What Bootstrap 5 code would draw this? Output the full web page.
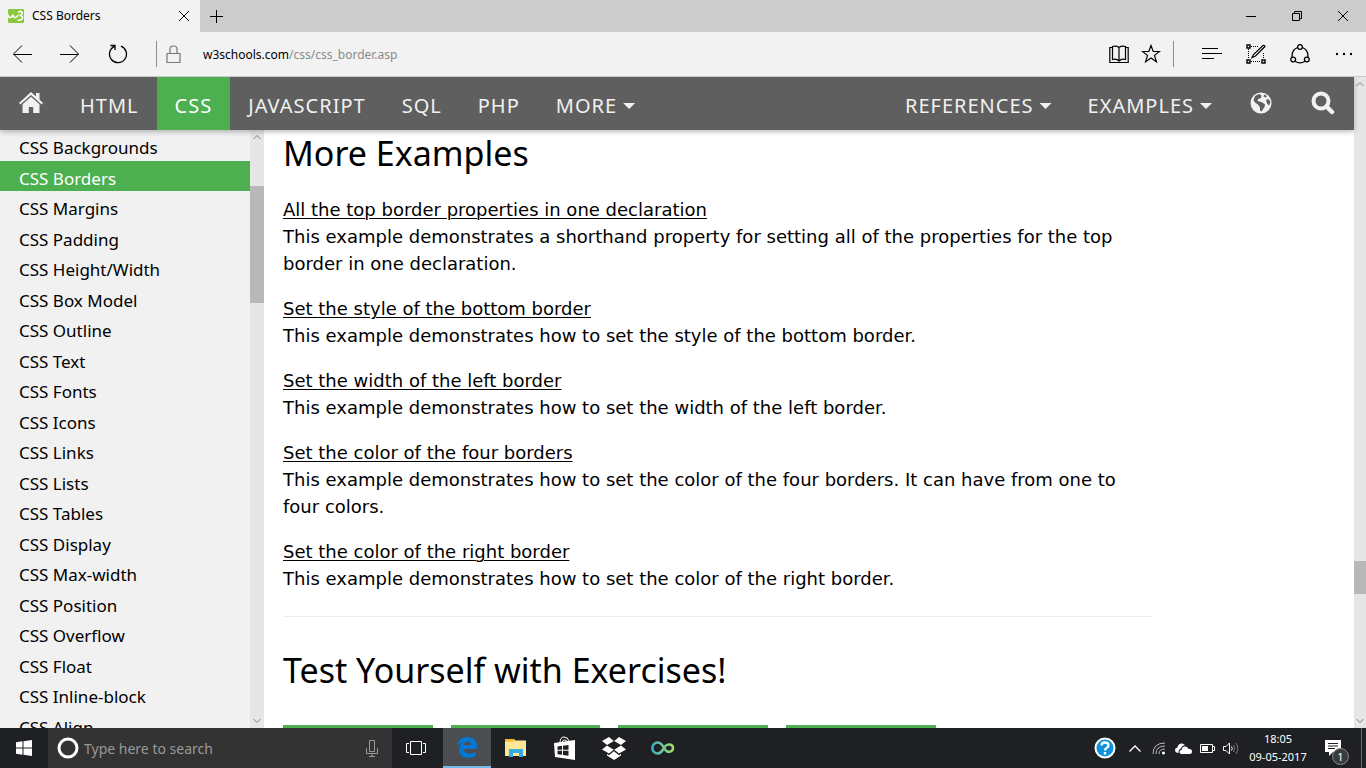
<!DOCTYPE html>
<html lang="en">
<head>
<meta charset="utf-8">
<meta name="viewport" content="width=device-width, initial-scale=1">
<title>CSS Borders</title>
<link href="https://cdn.jsdelivr.net/npm/bootstrap@5.3.0/dist/css/bootstrap.min.css" rel="stylesheet">
<style>
  body { font-family: "Noto Sans", "Open Sans", sans-serif; font-size: 12px; color: #000; background: #fff; }
  button { border: 0; background: transparent; padding: 0; color: inherit; }
  svg { display: block; flex: none; }
  .stroke { fill: none; stroke: currentColor; }

  /* browser chrome */
  .tabstrip { height: 32px; background: #ccc; }
  .tab-open { width: 200px; background: #f2f2f2; padding: 0 10px 0 8px; }
  .tab-add { width: 32px; }
  .win-btn { width: 46px; }
  .toolbar { height: 45px; background: #f2f2f2; border-bottom: 1px solid #c8c8c8; }
  .tool-btn { width: 44px; height: 44px; }
  .tool-btn.narrow { width: 32px; }
  .bar { width: 1px; height: 26px; background: #8c8c8c; }
  .bar-right { margin: 0 16px 0 6px; }
  .lock { color: #777; }
  .address { padding: 1px 0 0 10px; color: #8a8a8a; white-space: nowrap; }

  /* site navigation */
  .topnav { height: 53px; background: #5f5f5f; box-shadow: 0 2px 5px rgba(0,0,0,.26); z-index: 3; }
  .topnav a { color: #f1f1f1; text-decoration: none; font-size: 20px; letter-spacing: 1px; padding: 5px 18px 0; white-space: nowrap; }
  .topnav a.active { background: #4caf50; color: #fff; }
  .topnav a.icon-cell { width: 62px; padding: 0 0 2px; }
  .caret { width: 12px; height: 6px; margin-left: 6px; background: currentColor; clip-path: polygon(0 0, 100% 0, 50% 100%); }

  /* sidebar */
  .side-list { width: 250px; background: #f1f1f1; }
  .side-list a { color: #000; text-decoration: none; font-size: 17px; line-height: 1.5; padding: 5px 0 0 19px; flex: none; }
  .side-list a.active { background: #4caf50; color: #fff; }
  .scroll-track { background: #e6e6e6; color: #808080; }
  .scroll-side { width: 14px; }
  .scroll-page { width: 12px; }
  .thumb-side { height: 117px; margin-top: 46px; background: #b8b8b8; }
  .thumb-page { height: 33px; margin-top: 474px; background: #b8b8b8; }

  /* article */
  .article { padding: 0 19px; font-family: "DejaVu Sans", sans-serif; font-size: 18px; line-height: 27px; }
  .article h2 { font-family: "Noto Sans", "Open Sans", sans-serif; font-size: 34px; line-height: 46px; font-weight: 400; margin: 0 0 20px; }
  .article p { margin: 0 0 18px; }
  .article a { color: #000; text-decoration: underline; text-underline-offset: 2px; text-decoration-thickness: 1px; }
  .article hr { margin: 24px 0 30px; border-top: 1px solid #eee; opacity: 1; }
  .exercises { display: grid; grid-template-columns: repeat(4, 1fr); gap: 18px; margin-top: 32px; }
  .exercises a { height: 48px; background: #4caf50; }

  /* taskbar */
  .taskbar { height: 40px; background: #1f2023; color: #fff; z-index: 4; }
  .start { width: 48px; }
  .search { width: 344px; background: #333; color: #999; padding: 0 14px 0 9px; }
  .search input { border: 0; background: transparent; font-size: 14px; color: #fff; outline: 0; padding: 0 0 0 5px; }
  .search input::placeholder { color: #999; opacity: 1; }
  .app { width: 48px; }
  .app.current { background: #4b4d50; border-bottom: 2px solid #76b9ed; }
  .pinned { gap: 1px; margin-left: 3px; }
  .help { width: 36px; }
  .tray { width: 24px; }
  .clock { width: 70px; line-height: 18px; font-size: 11px; }
  .notice { width: 48px; }
  .notice-count { right: 12px; bottom: 3px; width: 17px; height: 17px; border-radius: 50%; background: #3a3b3d; border: 1px solid #8a8a8a; line-height: 15px; font-size: 11px; }
  .peek { width: 5px; border-left: 1px solid #6a6a6a; }
</style>
</head>
<body class="d-flex flex-column vh-100 overflow-hidden">

<header class="flex-shrink-0">
  <div class="tabstrip d-flex">
    <div class="tab-open d-flex align-items-center">
      <svg width="16" height="14" viewBox="0 0 16 14"><rect width="16" height="14" rx="1" fill="#8bc63f"/><path d="M0 5.500q.5 3.500 2.500 3T5 5.500q.3 3.500 2.500 3T10 5.500M10 3.500q2.500-2 4-.5 1 2.500-2.500 3.500 3.500 0 3 2.500-1 3-5 2" fill="none" stroke="#fff" stroke-width="1.500"/></svg>
      <span class="ms-2 flex-grow-1">CSS Borders</span>
      <button aria-label="Close tab"><svg width="12" height="12" viewBox="0 0 12 12" class="stroke"><path d="M1 1l10 10M11 1L1 11"/></svg></button>
    </div>
    <button class="tab-add d-flex align-items-center justify-content-center" aria-label="New tab"><svg width="13" height="13" viewBox="0 0 13 13" class="stroke"><path d="M6.500 0v13M0 6.500h13"/></svg></button>
    <div class="d-flex ms-auto">
      <button class="win-btn d-flex align-items-center justify-content-center" aria-label="Minimize"><svg width="10" height="10" class="stroke"><path d="M0 5.500h10"/></svg></button>
      <button class="win-btn d-flex align-items-center justify-content-center" aria-label="Restore"><svg width="10" height="10" class="stroke"><path d="M.5 2.500h7v7h-7zM2.500 2.500v-2h7v7h-2"/></svg></button>
      <button class="win-btn d-flex align-items-center justify-content-center" aria-label="Close"><svg width="10" height="10" class="stroke"><path d="M0 0l10 10M10 0L0 10"/></svg></button>
    </div>
  </div>

  <div class="toolbar d-flex align-items-center">
    <div class="d-flex gap-1">
      <button class="tool-btn d-flex align-items-center justify-content-center" aria-label="Back"><svg width="20" height="18" viewBox="0 0 20 18" class="stroke"><path d="M10 .5L1.500 9l8.500 8.500M1.500 9.500H20"/></svg></button>
      <button class="tool-btn d-flex align-items-center justify-content-center" aria-label="Forward"><svg width="20" height="18" viewBox="0 0 20 18" class="stroke"><path d="M10 .5L18.500 9 10 17.500M18.500 9.500H0"/></svg></button>
      <button class="tool-btn d-flex align-items-center justify-content-center" aria-label="Refresh"><svg width="20" height="20" viewBox="0 0 20 20" class="stroke"><path d="M13 2.200a8.500 8.500 0 1 1-6.500.2M2.500 1.500H7V6" stroke-width="1.300"/></svg></button>
    </div>
    <div class="bar ms-3"></div>
    <button class="lock tool-btn narrow d-flex align-items-center justify-content-center" aria-label="Site information"><svg width="15" height="19" viewBox="0 0 15 19" class="stroke"><path d="M1 8.500h13v9H1zM4 8V4q0-3 3.500-3T11 4v4" stroke-width="1.200"/></svg></button>
    <div class="address flex-grow-1 ms-1" role="textbox" aria-label="Address"><span class="text-black">w3schools.com</span>/css/css_border.asp</div>
    <button class="tool-btn narrow d-flex align-items-center justify-content-center" aria-label="Reading view"><svg width="20" height="19" viewBox="0 0 20 19" class="stroke"><path d="M10 2.500Q7.500.5 3.500 1.500v13q4-1 6.500 1.500 2.500-2.500 6.500-1.500v-13Q12.500.5 10 2.500v13M3 2.500H.8v15h18.400v-15H17" stroke-width="1.200"/></svg></button>
    <button class="tool-btn narrow d-flex align-items-center justify-content-center" aria-label="Add to favorites"><svg width="20" height="20" viewBox="0 0 20 20" class="stroke"><path d="M10 1.500l2.200 6h6.300l-5 3.900 1.900 6.300-5.400-3.700-5.400 3.700 1.900-6.300-5-3.900h6.300z" stroke-width="1.200"/></svg></button>
    <div class="bar bar-right"></div>
    <button class="tool-btn d-flex align-items-center justify-content-center" aria-label="Hub"><svg width="20" height="12" viewBox="0 0 20 12" class="stroke"><path d="M0 .5h16M0 5.500h20M0 10.500h12"/></svg></button>
    <button class="tool-btn d-flex align-items-center justify-content-center" aria-label="Web note"><svg width="20" height="20" viewBox="0 0 20 20" class="stroke"><path d="M5 2.500h7M2.500 5v10M5 17.500h10M17.500 9v6" stroke-dasharray="1 1"/><path d="M1 1h3v3H1zM1 16h3v3H1zM16 16h3v3h-3z" stroke-width="1.400"/><path d="M6 13.500l1.500-3L17 1.500q1.500-.5 2 1L9.500 12z" stroke-width="1.200"/></svg></button>
    <button class="tool-btn d-flex align-items-center justify-content-center" aria-label="Share"><svg width="20" height="20" viewBox="0 0 20 20" class="stroke" stroke-width="1.300"><circle cx="10" cy="3" r="2.400"/><circle cx="3.200" cy="15.500" r="2.400"/><circle cx="16.800" cy="15.500" r="2.400"/><path d="M7.500 3.500Q1.500 6 2.200 13M12.500 3.500Q18.500 6 17.800 13M5 17.200q5 3.300 10 0"/></svg></button>
    <button class="tool-btn d-flex align-items-center justify-content-center" aria-label="More actions"><svg width="18" height="4" fill="currentColor"><circle cx="2" cy="2" r="1.200"/><circle cx="9" cy="2" r="1.200"/><circle cx="16" cy="2" r="1.200"/></svg></button>
  </div>
</header>

<div class="d-flex flex-grow-1 overflow-hidden">
  <div class="d-flex flex-column flex-grow-1">

    <nav class="topnav d-flex position-relative flex-shrink-0" aria-label="Site">
      <a href="#" class="icon-cell d-flex align-items-center justify-content-center" aria-label="Home"><svg width="24" height="21" viewBox="0 0 24 21" fill="#f1f1f1"><path d="M12 0l5 4.500V1h3.500v6.500L24 11l-1.300 1.500L12 3 1.300 12.500 0 11z"/><path d="M3.500 12.300L12 4.700l8.500 7.600V21h-6.300v-6H9.800v6H3.500z"/></svg></a>
      <a href="#" class="d-flex align-items-center">HTML</a>
      <a href="#" class="active d-flex align-items-center" aria-current="page">CSS</a>
      <a href="#" class="d-flex align-items-center">JAVASCRIPT</a>
      <a href="#" class="d-flex align-items-center">SQL</a>
      <a href="#" class="d-flex align-items-center">PHP</a>
      <a href="#" class="d-flex align-items-center">MORE<span class="caret"></span></a>
      <a href="#" class="d-flex align-items-center ms-auto">REFERENCES<span class="caret"></span></a>
      <a href="#" class="d-flex align-items-center">EXAMPLES<span class="caret"></span></a>
      <a href="#" class="icon-cell d-flex align-items-center justify-content-center" aria-label="Translate"><svg width="22" height="22" viewBox="0 0 22 22"><circle cx="11" cy="11" r="10.500" fill="#f1f1f1"/><path d="M5 4l4-2 2.500 1.500-.5 2.500-3 1-.5 2 2 .5 3 1 2.500 2-.5 2.500-3 4.500-1.500-1v-3l-2-3L5 10.500 3.500 8zM14.500 2.500l2.500 1.500-1 1.500-2.500-1zM16 8l2.500-1 2 3-1.500 3.500-2-2z" fill="#5f5f5f"/></svg></a>
      <a href="#" class="icon-cell d-flex align-items-center justify-content-center" aria-label="Search"><svg width="24" height="24" viewBox="0 0 24 24" fill="none" stroke="#f1f1f1"><circle cx="10" cy="10" r="7.500" stroke-width="4"/><path d="M15.500 15.500l5.500 5.500" stroke-width="4.500" stroke-linecap="round"/></svg></a>
    </nav>

    <div class="d-flex flex-grow-1 overflow-hidden">
      <nav class="side-list d-flex flex-column overflow-hidden flex-shrink-0" aria-label="CSS tutorial">
        <a href="#">CSS Backgrounds</a>
        <a href="#" class="active" aria-current="page">CSS Borders</a>
        <a href="#">CSS Margins</a>
        <a href="#">CSS Padding</a>
        <a href="#">CSS Height/Width</a>
        <a href="#">CSS Box Model</a>
        <a href="#">CSS Outline</a>
        <a href="#">CSS Text</a>
        <a href="#">CSS Fonts</a>
        <a href="#">CSS Icons</a>
        <a href="#">CSS Links</a>
        <a href="#">CSS Lists</a>
        <a href="#">CSS Tables</a>
        <a href="#">CSS Display</a>
        <a href="#">CSS Max-width</a>
        <a href="#">CSS Position</a>
        <a href="#">CSS Overflow</a>
        <a href="#">CSS Float</a>
        <a href="#">CSS Inline-block</a>
        <a href="#">CSS Align</a>
      </nav>
      <div class="scroll-track scroll-side d-flex flex-column flex-shrink-0">
        <svg class="stroke mx-auto mt-1" width="8" height="6"><path d="M.5 5L4 1.500 7.500 5"/></svg>
        <div class="thumb-side"></div>
        <svg class="stroke mx-auto mt-auto mb-1" width="8" height="6"><path d="M.5 1L4 4.500 7.500 1"/></svg>
      </div>

      <div class="flex-grow-1 overflow-hidden">
        <main class="article col-10">
          <h2>More Examples</h2>
          <p><a href="#">All the top border properties in one declaration</a><br>This example demonstrates a shorthand property for setting all of the properties for the top border in one declaration.</p>
          <p><a href="#">Set the style of the bottom border</a><br>This example demonstrates how to set the style of the bottom border.</p>
          <p><a href="#">Set the width of the left border</a><br>This example demonstrates how to set the width of the left border.</p>
          <p><a href="#">Set the color of the four borders</a><br>This example demonstrates how to set the color of the four borders. It can have from one to four colors.</p>
          <p><a href="#">Set the color of the right border</a><br>This example demonstrates how to set the color of the right border.</p>
          <hr>
          <h2>Test Yourself with Exercises!</h2>
          <div class="exercises col-9">
            <a href="#" aria-label="Exercise 1"></a>
            <a href="#" aria-label="Exercise 2"></a>
            <a href="#" aria-label="Exercise 3"></a>
            <a href="#" aria-label="Exercise 4"></a>
          </div>
        </main>
      </div>
    </div>
  </div>

  <div class="scroll-track scroll-page d-flex flex-column flex-shrink-0">
    <svg class="stroke mx-auto mt-1" width="8" height="6"><path d="M.5 5L4 1.500 7.500 5"/></svg>
    <div class="thumb-page"></div>
    <svg class="stroke mx-auto mt-auto mb-1" width="8" height="6"><path d="M.5 1L4 4.500 7.500 1"/></svg>
  </div>
</div>

<footer class="taskbar d-flex flex-shrink-0">
  <button class="start d-flex align-items-center justify-content-center" aria-label="Start"><svg width="16" height="16" viewBox="0 0 16 16" fill="#fff"><path d="M0 2.200L6.500 1.300V7.500H0zM7.500 1.200L16 0v7.500H7.500zM0 8.500h6.500v6.200L0 13.800zM7.500 8.500H16V16l-8.500-1.200z"/></svg></button>
  <label class="search d-flex align-items-center">
    <svg width="22" height="22"><circle cx="11" cy="11" r="9" fill="none" stroke="#fff" stroke-width="3"/></svg>
    <input class="flex-grow-1" type="text" placeholder="Type here to search" aria-label="Type here to search">
    <svg width="12" height="17" class="stroke"><path d="M3.500.5h5v11h-5zM.5 8v5.500h11V8M6 13.500v3M3 16.500h6"/></svg>
  </label>
  <button class="app d-flex align-items-center justify-content-center" aria-label="Task view"><svg width="20" height="14" class="stroke"><path d="M4.500.5h11v13h-11zM3 2.500H.5v9H3M17 2.500h2.500v9H17"/></svg></button>
  <div class="pinned d-flex">
    <button class="app current d-flex align-items-center justify-content-center" aria-label="Edge"><svg width="20" height="21" viewBox="0 0 20 21"><path d="M0 9.500C1 3 5 0 10.500 0 16.500 0 20 4.200 20 9.500V12H6.500c.2 3 2.500 4.500 5.800 4.500 2.300 0 4.500-.6 6.200-1.700v4.500C16.500 20.400 14 21 11.500 21 5.500 21 2 17.500 2 12.500 2 9.500 3.700 7 6.800 5.500 4.500 5.500 2 6.700 0 9.500zM6.700 8.300H14C14 5.800 12.700 4.500 10.500 4.500 8.400 4.500 7 6.200 6.700 8.300z" fill="#0078d7"/></svg></button>
    <button class="app d-flex align-items-center justify-content-center" aria-label="File Explorer"><svg width="22" height="18" viewBox="0 0 22 18"><path d="M0 0h9l1.500 1.500H21V17H0z" fill="#ffe797"/><path d="M0 0h9v2.500H0z" fill="#f6b81c"/><path d="M4 18v-8h14v8h-4v-4H8v4z" fill="#35aee2"/></svg></button>
    <button class="app d-flex align-items-center justify-content-center" aria-label="Store"><svg width="22" height="24" viewBox="0 0 22 24"><path d="M6 7Q6 1 10 1q4 0 5 4M8 6q2-4 6 0" fill="none" stroke="#fff"/><path d="M0 7l21-3v20L1 21z" fill="#fff"/><path d="M3.500 10.500l4.500-.7v4H3.500zM9 9.700l5.500-.8v4.900H9zM3.500 14.800H8v4l-4.500-.6zM9 14.800h5.500v5L9 19z" fill="#1f2023"/></svg></button>
    <button class="app d-flex align-items-center justify-content-center" aria-label="Dropbox"><svg width="24" height="23" viewBox="0 0 24 23" fill="#fff"><path d="M7 0l4.800 4L5 8 0 4zM17 0l-4.800 4L19 8l5-4zM0 12.500l5-4 6.800 4.200L7 16.500zM24 12.500l-5-4-6.800 4.200 4.800 3.800zM5 17l2 1.300 4.900-4 5.100 4 2-1.300v1.500L12 23l-7-4.500z"/></svg></button>
    <button class="app d-flex align-items-center justify-content-center" aria-label="Infinity"><svg width="24" height="14" viewBox="0 0 24 14"><defs><linearGradient id="loop"><stop stop-color="#3bb1c9"/><stop offset="1" stop-color="#a5d867"/></linearGradient></defs><path d="M12 8.500C10.500 11 9 12.500 6.800 12.500A5.500 5.500 0 0 1 6.800 1.500C10.500 1.500 12 5 14 8.300c2 3.700 8 3 8-1.300S16 2.500 14 5.500z" fill="none" stroke="url(#loop)" stroke-width="2.500"/></svg></button>
  </div>
  <div class="d-flex ms-auto">
    <button class="help d-flex align-items-center justify-content-center" aria-label="Help"><svg width="22" height="22" viewBox="0 0 22 22"><circle cx="11" cy="11" r="9.500" fill="#0f93dd" stroke="#fff" stroke-width="2"/><path d="M7.500 8.500Q7.500 5.500 11 5.500t3.500 3Q14.500 10 12.500 11 11 11.700 11 13.500M11 15v2.500" fill="none" stroke="#fff" stroke-width="2.300"/></svg></button>
    <button class="tray d-flex align-items-center justify-content-center" aria-label="Show hidden icons"><svg width="12" height="7" class="stroke"><path d="M.5 6.500L6 1l5.500 5.500" stroke-width="1.300"/></svg></button>
    <button class="tray d-flex align-items-center justify-content-center" aria-label="Wi-Fi"><svg width="14" height="14" viewBox="0 0 14 14" class="stroke"><path d="M1 13Q1 2 13 2M4 13Q4 5 13 5M7 13Q7 8 13 8" stroke="#bbb"/><circle cx="11.500" cy="12" r="1.500" fill="#fff" stroke="none"/></svg></button>
    <button class="tray d-flex align-items-center justify-content-center" aria-label="OneDrive"><svg width="17" height="11" viewBox="0 0 17 11" fill="#fff"><path d="M3.500 10Q0 9.500 0 7q0-2.300 2.500-2.500Q3 1 6 .5 8.500 0 10 2.300 6.500 2.500 6 5.500 3.500 6 3.500 10z"/><path d="M6.500 11Q4.500 11 4.500 9q0-2 2.300-2.300Q7 3.500 10 3.500q2.500 0 3.300 2.300Q17 6 17 8.500T14.500 11z"/></svg></button>
    <button class="tray d-flex align-items-center justify-content-center" aria-label="Battery"><svg width="15" height="9"><path d="M.5.5h12v8H.5zM12.500 2.500h2v4h-2" class="stroke"/><path d="M2 2h6v5H2z" fill="#fff"/></svg></button>
    <button class="tray d-flex align-items-center justify-content-center" aria-label="Volume"><svg width="16" height="13" class="stroke"><path d="M.5 4.500H3L6.500 1v11L3 8.500H.5zM8.500 4.500q1.500 2 0 4"/><path d="M10.500 3q2.500 3.500 0 7M13 1q3.500 5.500 0 11" stroke="#777"/></svg></button>
    <button class="clock text-center" aria-label="Clock">18:05<br>09-05-2017</button>
    <button class="notice position-relative d-flex align-items-center justify-content-center pe-2" aria-label="Notifications"><svg width="16" height="16"><path d="M0 0h16v12H8l-4 4v-4H0z" fill="#fff"/><path d="M3 3.500h10M3 6h10M3 8.500h7" stroke="#1f2023"/></svg><span class="notice-count position-absolute">1</span></button>
    <div class="peek"></div>
  </div>
</footer>

<script src="https://cdn.jsdelivr.net/npm/bootstrap@5.3.0/dist/js/bootstrap.bundle.min.js"></script>
</body>
</html>
